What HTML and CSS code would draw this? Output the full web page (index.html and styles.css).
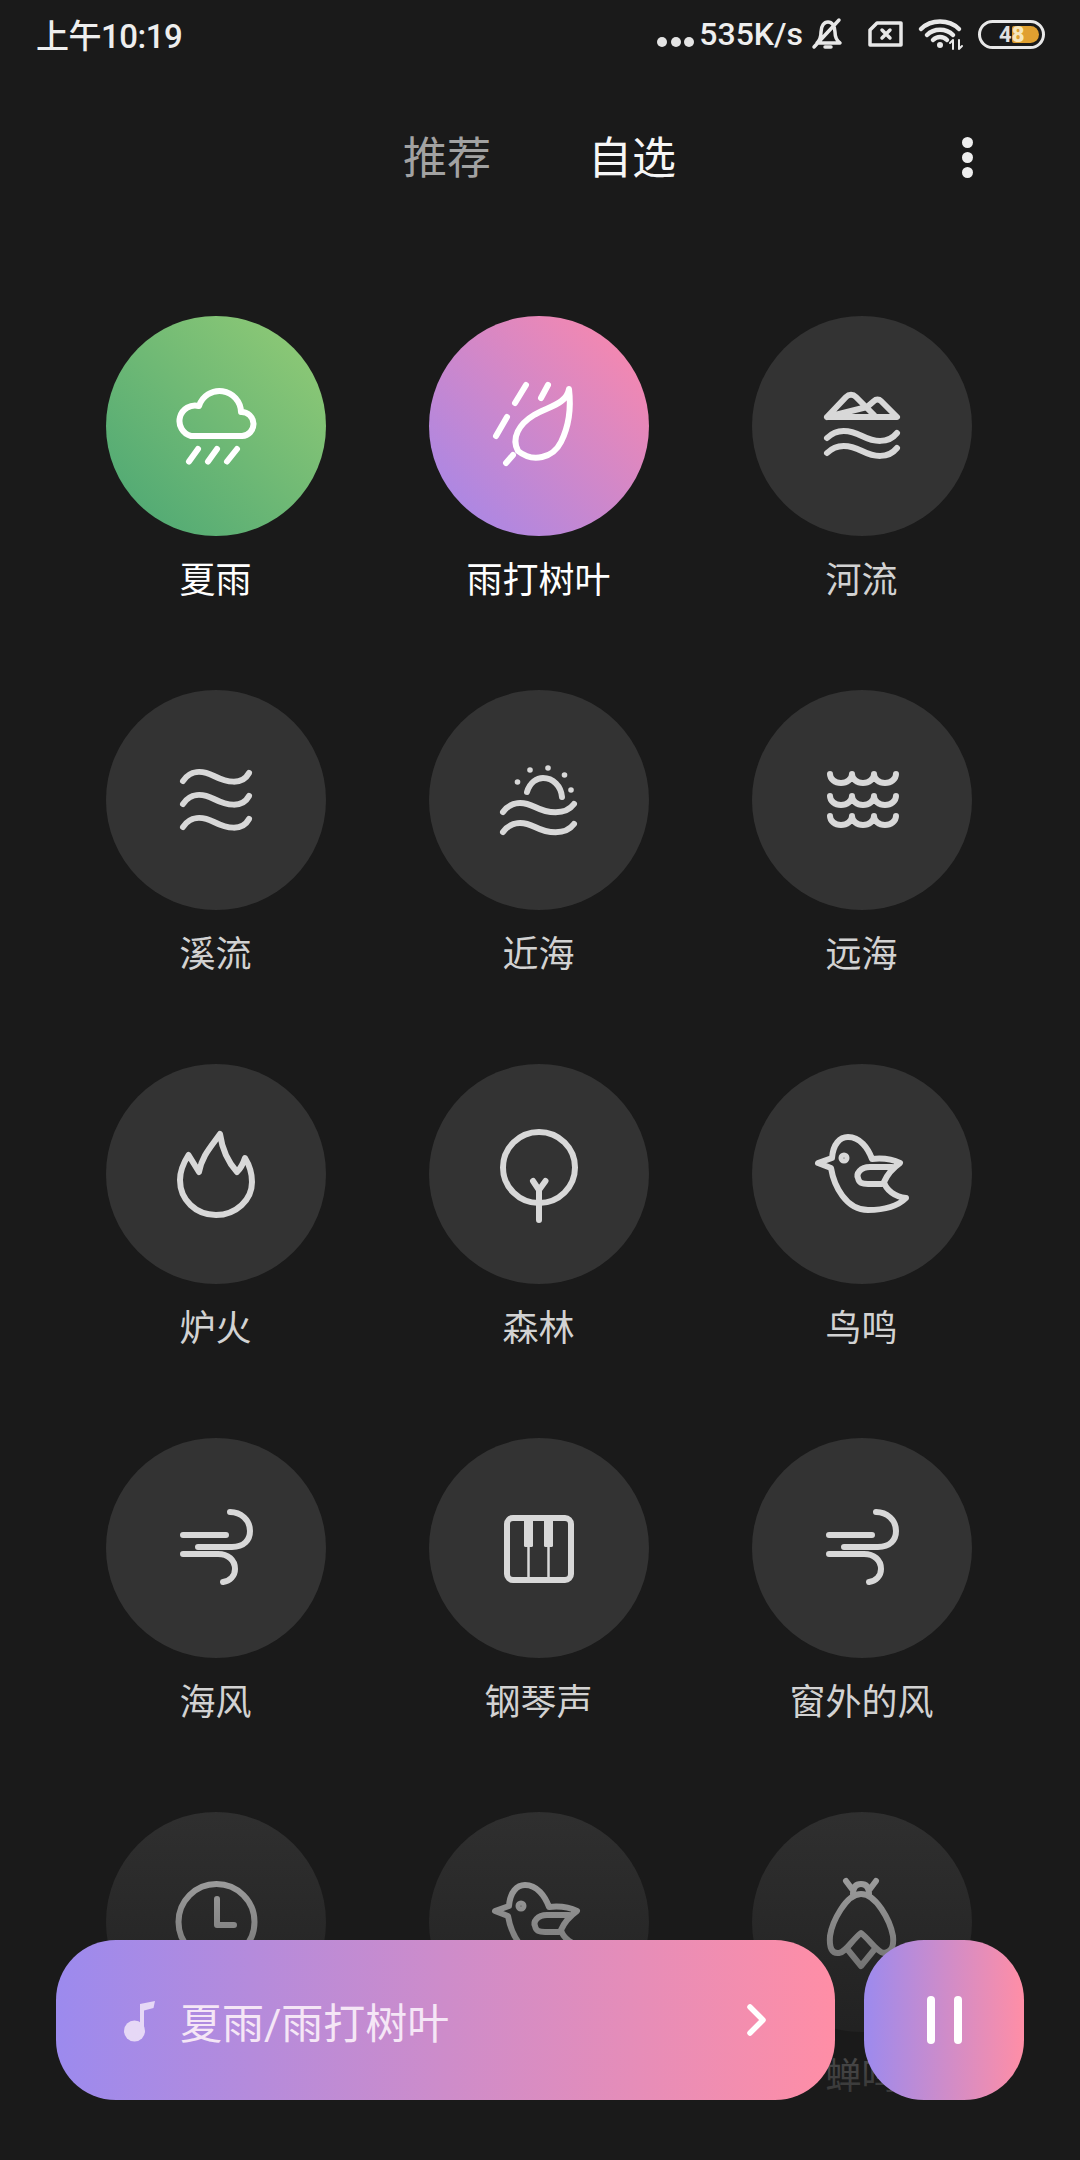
FILE: index.html
```html
<!DOCTYPE html>
<html lang="zh-CN">

<head>
  <meta charset="UTF-8">
  <title>白噪音</title>
  <link rel="stylesheet" href="styles.css">
</head>

<body>
  <svg class="sprites">
    <symbol id="i-bird" viewBox="0 0 100 100">
      <path d="M20 34C21 20 28 13 36 13C48 13 56 24 60 35C70 34 80 35 88 39C81 44 75 51 72 58C74 66 83 73 94 74C86 82 72 86 56 86C34 86 22 62 19 44L6 39L20 34Z" />
      <path d="M80 43H58C48 43 44 50 46 54C47 59 50 60 56 60H70" />
      <circle class="solid" cx="32" cy="34" r="2.500" />
    </symbol>
    <symbol id="i-wind" viewBox="0 0 100 100">
      <path d="M17 37H60M32 49H66C78 49 84 42 84 33C84 22 75 14 64 14M17 56H52C62 56 69 62 69 71C69 78 64 83 57 84" />
    </symbol>
  </svg>

  <div class="page">
    <div class="statusbar">
      <span class="time">上午10:19</span>
      <div class="status-right">
        <span class="dots"><i></i><i></i><i></i></span>
        <span class="speed">535K/s</span>
        <svg class="st-bell" viewBox="0 0 30 30">
          <path d="M4 24C7 21 8 17 8 13C8 7 11 3 15 3C19 3 22 7 22 13C22 17 23 21 27 24H4ZM1 28L26 1" />
          <path class="thick" d="M12 28H18" />
        </svg>
        <svg class="st-sim" viewBox="0 0 35 26">
          <path d="M9 2H33V24H2V9L9 2Z" />
          <path d="M14 9L22 17M22 9L14 17" />
        </svg>
        <svg class="st-wifi" viewBox="0 0 43 28">
          <path d="M2 9C12 -1 30 -1 40 9M8 15C15 8 27 8 34 15M14 20C18 16 24 16 28 20" />
          <circle class="solid" cx="21" cy="25" r="3" />
          <path class="thin" d="M34 29V20M34 20L31 23M40 20V29M40 29L43 26" />
        </svg>
        <div class="battery">
          <span class="battery-fill"></span>
          <span class="battery-num">4<b>8</b></span>
        </div>
      </div>
    </div>

    <div class="tabs">
      <span class="tab">推荐</span>
      <span class="tab tab-on">自选</span>
      <span class="more"><i></i><i></i><i></i></span>
    </div>

    <div class="grid">
      <div class="cell on">
        <div class="circle green">
          <svg class="icon" viewBox="0 0 100 100">
            <path d="M25 60H76A12 12 0 0 0 75 36A21.500 21.500 0 0 0 33 30A15.500 15.500 0 0 0 25 60Z" />
            <path d="M23 85.500L32 73M42 85.500L51 73M61 85.500L71 73" />
          </svg>
        </div>
        <div class="label">夏雨</div>
      </div>
      <div class="cell on">
        <div class="circle pink">
          <svg class="icon" viewBox="0 0 100 100">
            <path d="M80 13C78 28 58 31 45 39C30 48 22 62 29 75C44 87 64 82 72 66C80 50 82 30 80 13Z" />
            <path d="M24 79L17 87M37 9L26 27M59 9L52 22M18 41L7 60" />
          </svg>
        </div>
        <div class="label">雨打树叶</div>
      </div>
      <div class="cell">
        <div class="circle">
          <svg class="icon" viewBox="0 0 100 100">
            <path d="M15 41L34 21C37 18 41 18 44 21L62 39M55 31L62 25C64 23 67 23 69 25L85 41H15Z" />
            <path d="M15 62C25 52 38 54 50 60C62 66 76 68 85 57M15 77C25 67 38 69 50 75C62 81 76 83 85 72" />
          </svg>
        </div>
        <div class="label">河流</div>
      </div>

      <div class="cell">
        <div class="circle">
          <svg class="icon" viewBox="0 0 100 100">
            <path d="M17 31C24 20 36 20 48 26C60 32 76 36 83 23M17 54C24 43 36 43 48 49C60 55 76 59 83 46M17 77C24 66 36 66 48 72C60 78 76 82 83 69" />
          </svg>
        </div>
        <div class="label">溪流</div>
      </div>
      <div class="cell">
        <div class="circle">
          <svg class="icon" viewBox="0 0 100 100">
            <path d="M14 62C22 51 34 51 46 57C58 63 76 66 85 54M14 82C22 71 34 71 46 77C58 83 76 86 85 74" />
            <path d="M38 42C41 32 48 28 54 28C64 28 72 36 73 47" />
            <circle class="solid" cx="28.500" cy="32" r="2.800" />
            <circle class="solid" cx="41" cy="20" r="2.800" />
            <circle class="solid" cx="59" cy="18" r="2.800" />
            <circle class="solid" cx="75.500" cy="25" r="2.800" />
            <circle class="solid" cx="82" cy="40" r="2.800" />
          </svg>
        </div>
        <div class="label">近海</div>
      </div>
      <div class="cell">
        <div class="circle">
          <svg class="icon" viewBox="0 0 100 100">
            <path d="M18 24A11 9 0 0 0 40 24A11 9 0 0 0 62 24A11 9 0 0 0 84 24" />
            <path d="M18 46A11 9 0 0 0 40 46A11 9 0 0 0 62 46A11 9 0 0 0 84 46" />
            <path d="M18 66A11 9 0 0 0 40 66A11 9 0 0 0 62 66A11 9 0 0 0 84 66" />
          </svg>
        </div>
        <div class="label">远海</div>
      </div>

      <div class="cell">
        <div class="circle">
          <svg class="icon" viewBox="0 0 100 100">
            <path d="M22.500 31L33 48C36 32 44 24 54 10C56 24 62 38 71 48C75 44 77 40 79 34C84 42 86 50 86 58C86 76 70 91 50 91C30 91 14 76 14 56C14 46 18 38 22.500 31Z" />
          </svg>
        </div>
        <div class="label">炉火</div>
      </div>
      <div class="cell">
        <div class="circle">
          <svg class="icon" viewBox="0 0 100 100">
            <ellipse cx="50" cy="43.500" rx="36" ry="35.500" />
            <path d="M50 96V66M44 57L50 66L56.500 57" />
          </svg>
        </div>
        <div class="label">森林</div>
      </div>
      <div class="cell">
        <div class="circle">
          <svg class="icon"><use href="#i-bird" /></svg>
        </div>
        <div class="label">鸟鸣</div>
      </div>

      <div class="cell">
        <div class="circle">
          <svg class="icon"><use href="#i-wind" /></svg>
        </div>
        <div class="label">海风</div>
      </div>
      <div class="cell">
        <div class="circle">
          <svg class="icon" viewBox="0 0 100 100">
            <rect x="18" y="20" width="64" height="62" rx="6" />
            <rect class="solid" x="35" y="20" width="9" height="29" rx="1.500" />
            <rect class="solid" x="55" y="20" width="9" height="29" rx="1.500" />
            <path class="thin" d="M39.500 48V82M59.500 48V82" />
          </svg>
        </div>
        <div class="label">钢琴声</div>
      </div>
      <div class="cell">
        <div class="circle">
          <svg class="icon"><use href="#i-wind" /></svg>
        </div>
        <div class="label">窗外的风</div>
      </div>

      <div class="cell">
        <div class="circle">
          <svg class="icon" viewBox="0 0 100 100">
            <circle cx="50.500" cy="50" r="38" />
            <path d="M51 27V53H68" />
          </svg>
        </div>
      </div>
      <div class="cell">
        <div class="circle">
          <svg class="icon"><use href="#i-bird" /></svg>
        </div>
      </div>
      <div class="cell">
        <div class="circle">
          <svg class="icon" viewBox="0 0 100 100">
            <path d="M34 9L40 17M64 9L58 17M41 22C41 14 45 12 49 12C53 12 57 14 57 22" />
            <path d="M49 22C34 22 20 50 18 64C17 76 20 82 27 81C34 80 40 68 49 61C58 68 65 80 72 81C80 80 82 74 81 64C78 48 64 22 49 22Z" />
            <path d="M36 78L49 94L62 78" />
          </svg>
        </div>
        <div class="label">蝉鸣</div>
      </div>
    </div>

    <div class="fade"></div>

    <div class="player">
      <div class="now-playing">
        <svg class="note" viewBox="0 0 31 41">
          <circle cx="10.500" cy="30" r="10.500" />
          <path d="M16 30V3L31 0L29.500 7L20 9.500V30Z" />
        </svg>
        <span class="now-title">夏雨/雨打树叶</span>
        <svg class="chevron" viewBox="0 0 19 32">
          <path d="M3 3L16 16L3 29" />
        </svg>
      </div>
      <div class="pause"><i></i><i></i></div>
    </div>
  </div>
</body>

</html>
```

FILE: styles.css
```css
* {
  box-sizing: border-box;
}

body {
  margin: 0;
  background-color: #1a1a1a;
  font-family: Roboto, 'Noto Sans CJK SC', sans-serif;
}

.sprites {
  display: none;
}

.page {
  position: relative;
  width: 1080px;
  height: 2160px;
  overflow: hidden;
}

/* status bar */
.statusbar {
  display: flex;
  align-items: center;
  justify-content: space-between;
  height: 68px;
  padding: 0 35px 0 36px;
  color: #eee;
}

.time {
  font-size: 33px;
  font-weight: 500;
  letter-spacing: -0.5px;
}

.status-right {
  display: flex;
  align-items: center;
}

.dots {
  display: flex;
  gap: 3.500px;
  margin: 16px 5px 0 0;
}

.dots i {
  width: 10px;
  height: 10px;
  border-radius: 50%;
  background-color: #e4e4e4;
}

.speed {
  font-size: 32px;
  font-weight: 500;
  line-height: 68px;
}

.statusbar svg {
  overflow: visible;
  fill: none;
  stroke: #e8e8e8;
  stroke-width: 3.500;
  stroke-linecap: round;
  stroke-linejoin: round;
}

.statusbar svg .solid {
  fill: #e8e8e8;
  stroke: none;
}

.statusbar svg .thin {
  stroke-width: 2;
}

.st-bell {
  width: 30px;
  height: 30px;
  margin: 0 25px 0 10px;
}

.st-sim {
  width: 35px;
  height: 26px;
  margin-right: 16px;
}

.st-wifi {
  width: 43px;
  height: 28px;
  margin-right: 16px;
}

.st-wifi path:first-child {
  stroke-width: 4.500;
}

.battery {
  position: relative;
  width: 67px;
  height: 29px;
  border: 3px solid #e8e8e8;
  border-radius: 15px;
}

.battery-fill {
  position: absolute;
  top: 3px;
  right: 3px;
  width: 27px;
  height: 17px;
  border-radius: 2px 9px 9px 2px;
  background-color: #e0a030;
}

.battery-num {
  position: absolute;
  top: 0;
  left: 18px;
  font-size: 22px;
  font-weight: 700;
  line-height: 23px;
  color: #e0e0e0;
}

.battery-num b {
  color: #f6e6bd;
}

/* tabs */
.tabs {
  display: flex;
  align-items: center;
  gap: 97px;
  height: 173px;
  padding-left: 403px;
}

.tab {
  font-size: 44px;
  color: #a2a2a2;
}

.tab-on {
  color: #f6f6f6;
}

.more {
  display: flex;
  flex-direction: column;
  gap: 4px;
  margin: 5px 107px 0 auto;
}

.more i {
  width: 11px;
  height: 11px;
  border-radius: 50%;
  background-color: #eee;
}

/* sound grid */
.grid {
  display: grid;
  grid-template-columns: repeat(3, 323px);
  grid-auto-rows: 374px;
  padding: 75px 0 0 54px;
}

.cell {
  display: flex;
  flex-direction: column;
  align-items: center;
  color: #d2d2d2;
}

.cell.on {
  color: #fff;
}

.circle {
  display: flex;
  align-items: center;
  justify-content: center;
  width: 220px;
  height: 220px;
  border-radius: 50%;
  background-color: #333;
  color: #d8d8d8;
}

.cell.on .circle {
  color: #fff;
}

.green {
  background-image: linear-gradient(45deg, #4aa674, #94cc76);
}

.pink {
  background-image: linear-gradient(45deg, #a087ec, #ff88a8);
}

.icon {
  width: 100px;
  height: 100px;
  fill: none;
  stroke: currentColor;
  stroke-width: 6;
  stroke-linecap: round;
  stroke-linejoin: round;
}

.icon .solid {
  fill: currentColor;
  stroke: none;
}

.icon .thin {
  stroke-width: 2.500;
}

.label {
  margin-top: 23px;
  font-size: 36px;
  line-height: 44px;
}

/* bottom player */
.fade {
  position: absolute;
  right: 0;
  bottom: 0;
  left: 0;
  height: 410px;
  background-image: linear-gradient(rgba(26, 26, 26, 0), #1a1a1a);
}

.player {
  position: absolute;
  bottom: 60px;
  left: 56px;
  display: flex;
  gap: 29px;
}

.now-playing {
  display: flex;
  align-items: center;
  width: 779px;
  height: 160px;
  padding: 0 69px 0 68px;
  border-radius: 60px;
  background-image: linear-gradient(90deg, #9c8aee, #ff8ea6);
}

.note {
  width: 31px;
  height: 41px;
  margin: 3px 25px 0 0;
  fill: #e6d8f6;
}

.now-title {
  font-size: 42px;
  color: #f5e6f6;
}

.chevron {
  width: 19px;
  height: 32px;
  margin-left: auto;
  fill: none;
  stroke: #fff;
  stroke-width: 5.500;
  stroke-linecap: round;
  stroke-linejoin: round;
}

.pause {
  display: flex;
  align-items: center;
  justify-content: center;
  gap: 19px;
  width: 160px;
  height: 160px;
  border-radius: 60px;
  background-image: linear-gradient(90deg, #9c8aee, #ff8ea6);
}

.pause i {
  width: 8px;
  height: 48px;
  border-radius: 4px;
  background-color: #fff;
}
```
